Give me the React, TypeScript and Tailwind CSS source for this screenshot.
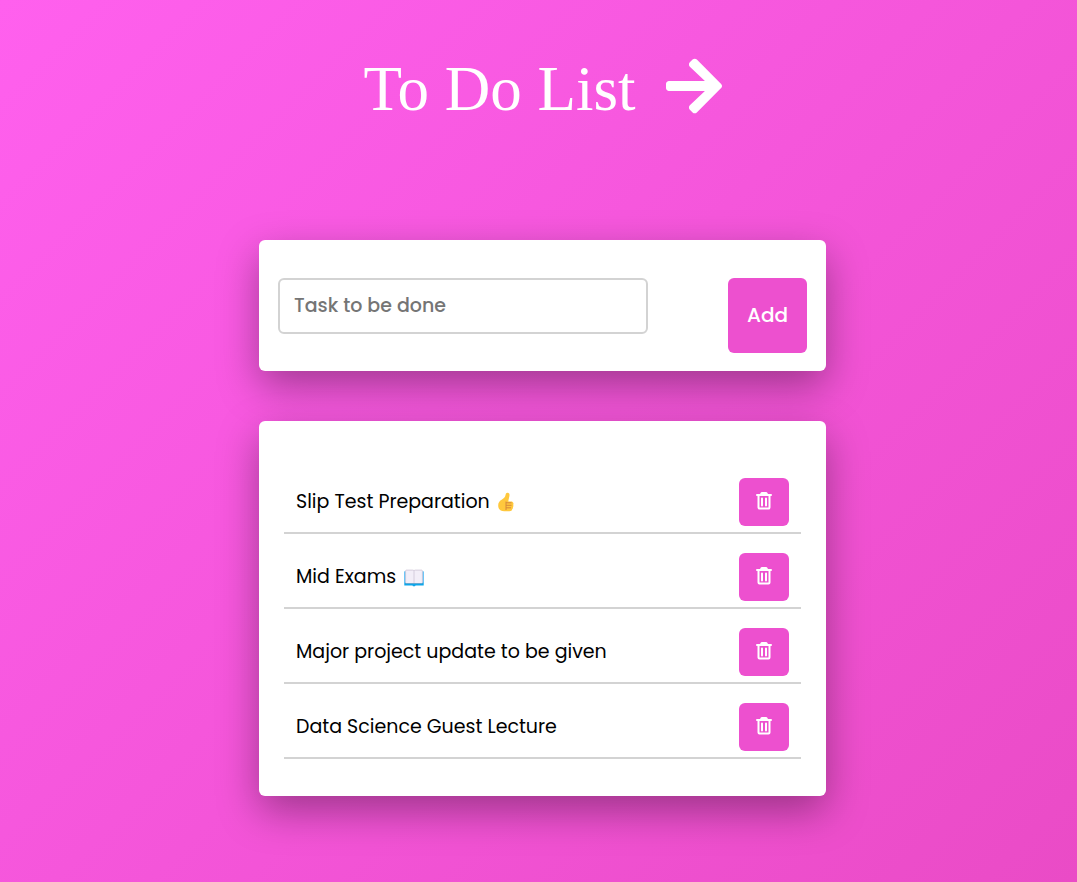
import { FormEvent, useState } from "react";
import { FaArrowRight } from "react-icons/fa";

type Emoji = "thumb" | "book";
type Task = { id: number; text: string; emoji?: Emoji };

const initialTasks: Task[] = [
  { id: 1, text: "Slip Test Preparation", emoji: "thumb" },
  { id: 2, text: "Mid Exams", emoji: "book" },
  { id: 3, text: "Major project update to be given" },
  { id: 4, text: "Data Science Guest Lecture" },
];

function ThumbIcon() {
  return (
    <svg className="h-5 w-4 shrink-0" viewBox="0 0 16 20" role="img" aria-label="Thumbs up">
      <path
        d="M9.800.8C8.500.6 7.800 1.400 7.600 2.800C7.200 5.400 5.600 6.600 3.600 7.800C1.300 9.200.2 10.900.2 13.400C.2 17 2.600 19.300 6.200 19.300h5.200c1.700 0 2.700-.7 2.800-2c.8-.5.9-1.300.7-2.100c.6-.7.7-1.600.3-2.300c.4-.7.4-1.600 0-2.200c-.4-.9-1.200-1.300-2.200-1.300H10.300C10.600 7 11.300 5 11.500 3.200C11.600 1.700 11 1 9.800.8Z"
        fill="#ffc83d"
      />
      <path
        d="M8 9.500v8.500M8 10.800h5.500M8 13.300h5.500M8 15.800h5"
        fill="none"
        stroke="#d6883b"
        strokeWidth="1"
      />
    </svg>
  );
}

function BookIcon() {
  return (
    <svg className="h-5 w-5 shrink-0" viewBox="0 0 20 20" role="img" aria-label="Open book">
      <path d="M.3 4.500h19.400v14h-8.200l-.5.700H9l-.5-.7H.3Z" fill="#0ea5e9" />
      <path d="M.5 4.500h1.100v11H.5ZM18.400 4.500h1.100v11h-1.100Z" fill="#83cbff" />
      <path d="M1.600 15.500h16.800v1H1.600Z" fill="#b4acbc" />
      <path d="M1.600 3.900c0-.5.400-.8.900-.8h6c.8 0 1.500.4 1.500.9V16H1.600Z" fill="#f3eef8" />
      <path d="M10 4c0-.5.700-.9 1.500-.9h6c.5 0 .9.300.9.800V16H10Z" fill="#f3eef8" />
      <path
        d="M10 4v12M1.600 15.500V3.900q0-.8.9-.8h6q1.500 0 1.500.9q0-.9 1.500-.9h6q.9 0 .9.800V15.500"
        fill="none"
        stroke="#cdc4d6"
        strokeWidth=".8"
      />
    </svg>
  );
}

function TrashIcon() {
  return (
    <svg
      className="h-[18px] w-4"
      viewBox="0 0 16 18"
      fill="none"
      stroke="currentColor"
      aria-hidden="true"
    >
      <path d="M4.600 3L5.200 1.700Q5.500 1 6.200 1H9.800Q10.500 1 10.800 1.700L11.400 3" strokeWidth="1.900" />
      <path d="M1 3H15" strokeWidth="2" strokeLinecap="round" />
      <path d="M2.500 3.500V15.500Q2.500 16.500 3.500 16.500H12.500Q13.500 16.500 13.500 15.500V3.500" strokeWidth="2" />
      <path d="M6 6.500V13.500M10 6.500V13.500" strokeWidth="2" strokeLinecap="round" />
    </svg>
  );
}

export default function App() {
  const [tasks, setTasks] = useState<Task[]>(initialTasks);
  const [draft, setDraft] = useState("");

  function addTask(event: FormEvent) {
    event.preventDefault();
    const text = draft.trim();
    if (!text) return;
    setTasks([...tasks, { id: Date.now(), text }]);
    setDraft("");
  }

  return (
    <div className="min-h-screen bg-[linear-gradient(135deg,#ff60ee,#ea4bc6)] px-4 pt-12 pb-[86px] font-[Poppins,Inter,sans-serif]">
      <h1 className="flex items-center justify-center gap-[30px] pl-2 font-['Liberation_Serif',serif] text-[63px] leading-[70px] text-white">
        <span className="pt-[6px]">To Do List</span>
        <FaArrowRight className="h-16 w-14" aria-hidden="true" />
      </h1>

      <main className="mx-auto mt-[116px] flex w-full max-w-[575px] flex-col gap-[50px] pl-2">
        <form
          onSubmit={addTask}
          className="flex items-start justify-between gap-4 rounded-md bg-white px-[19px] pt-[38px] pb-[18px] shadow-[0_15px_40px_rgba(0,0,0,0.35)]"
        >
          <input
            type="text"
            aria-label="Task to be done"
            placeholder="Task to be done"
            value={draft}
            onChange={(event) => setDraft(event.target.value)}
            className="h-14 w-full min-w-0 max-w-[370px] rounded-md border-2 border-[#d3d3d3] px-[14px] pb-[2px] text-[19px] font-medium text-black outline-none placeholder:text-[#757575]"
          />
          <button
            type="submit"
            className="h-[75px] shrink-0 rounded-md bg-[#ed50cf] px-[19px] pb-[2px] text-xl font-medium text-white"
          >
            Add
          </button>
        </form>

        <section
          aria-label="Tasks"
          className="rounded-md bg-white px-[25px] pt-[38px] pb-[37px] shadow-[0_15px_40px_rgba(0,0,0,0.35)]"
        >
          <ul>
            {tasks.map((task) => (
              <li
                key={task.id}
                className="flex items-end justify-between gap-4 border-b-2 border-[#d3d3d3] px-3 pt-[19px] pb-[6px]"
              >
                <span className="flex h-12 items-center gap-2 text-[19px] text-black">
                  {task.text}
                  {task.emoji === "thumb" && <ThumbIcon />}
                  {task.emoji === "book" && <BookIcon />}
                </span>
                <button
                  type="button"
                  aria-label={`Delete ${task.text}`}
                  onClick={() => setTasks(tasks.filter((item) => item.id !== task.id))}
                  className="flex h-12 w-[50px] shrink-0 items-center justify-center rounded-md bg-[#ed50cf] pb-[2px] text-white"
                >
                  <TrashIcon />
                </button>
              </li>
            ))}
          </ul>
        </section>
      </main>
    </div>
  );
}
